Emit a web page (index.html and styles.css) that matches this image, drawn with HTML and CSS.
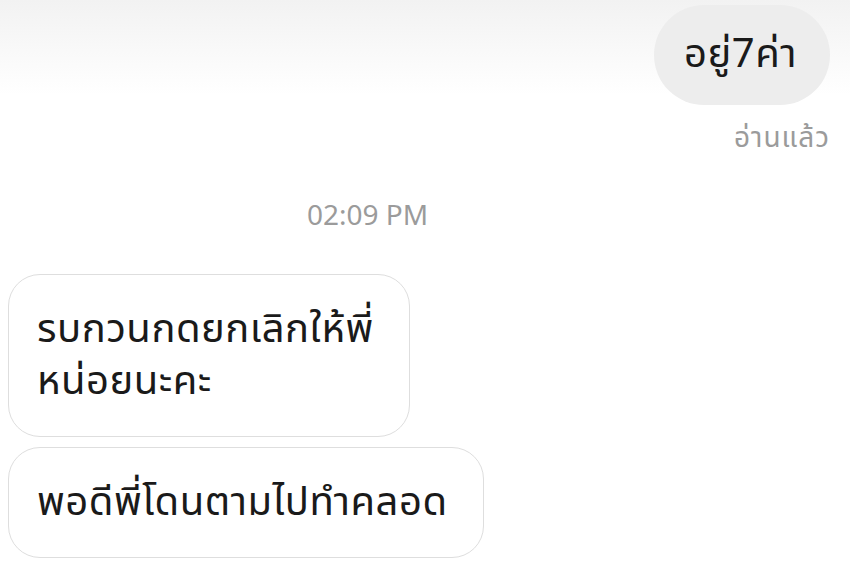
FILE: index.html
```html
<!DOCTYPE html>
<html lang="th">
<head>
<meta charset="utf-8">
<link rel="stylesheet" href="styles.css">
</head>
<body>
<div class="chat">
  <div class="row-out">
    <div class="bubble-out">อยู่7ค่า</div>
  </div>
  <div class="read">อ่านแล้ว</div>
  <div class="time">02:09 PM</div>
  <div class="bubble-in">รบกวนกดยกเลิกให้พี่<br>หน่อยนะคะ</div>
  <div class="bubble-in">พอดีพี่โดนตามไปทำคลอด</div>
</div>
</body>
</html>
```

FILE: styles.css
```css
html, body {
  margin: 0;
  padding: 0;
}
body {
  width: 850px;
  height: 583px;
  overflow: hidden;
  background: linear-gradient(#f2f2f2 0px, #ffffff 95px, #ffffff 100%);
  font-family: "Noto Sans Thai", "Noto Sans", "DejaVu Sans", sans-serif;
  color: #1a1a1a;
}
.chat {
  display: flex;
  flex-direction: column;
  padding: 5px 20px 0 8px;
}
.row-out {
  display: flex;
  justify-content: flex-end;
}
.bubble-out {
  background: #ededed;
  border-radius: 50px;
  height: 100px;
  padding: 0 33px 0 30px;
  display: flex;
  align-items: center;
  font-size: 40px;
  letter-spacing: 0.5px;
}
.read {
  align-self: flex-end;
  color: #9b9b9b;
  font-size: 28px;
  letter-spacing: 1px;
  line-height: 40px;
  margin-top: 14px;
}
.time {
  align-self: flex-start;
  margin-left: 299px;
  margin-top: 38px;
  color: #9b9b9b;
  font-size: 28px;
  line-height: 40px;
}
.bubble-in {
  align-self: flex-start;
  background: #fff;
  border: 1.5px solid #dedede;
  border-radius: 32px;
  padding: 28.5px 35px 28.5px 28px;
  font-size: 40px;
  letter-spacing: 0.5px;
  line-height: 52px;
  margin-top: 10px;
}
.time + .bubble-in {
  margin-top: 37px;
}
```
